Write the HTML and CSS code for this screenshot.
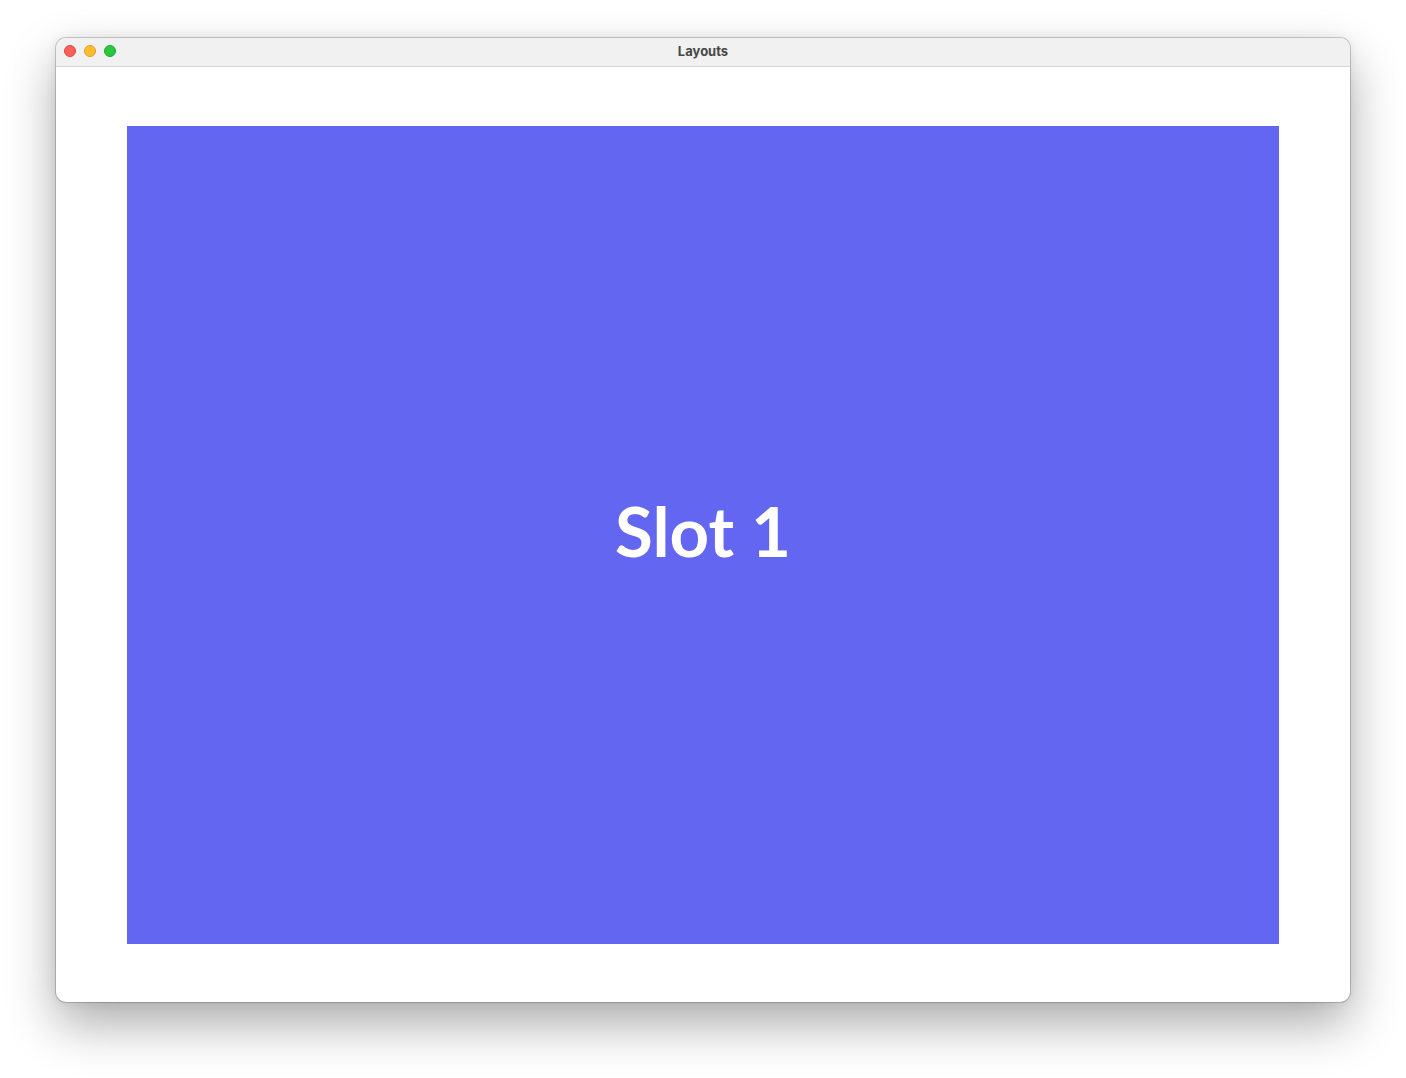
FILE: index.html
```html
<!DOCTYPE html>
<html>
<head>
<meta charset="utf-8">
<title>Layouts</title>
<link rel="stylesheet" href="styles.css">
</head>
<body>
<div class="window">
  <div class="titlebar">
    <div class="lights">
      <span class="light red"></span>
      <span class="light yellow"></span>
      <span class="light green"></span>
    </div>
    <div class="title">Layouts</div>
  </div>
  <div class="content">
    <div class="slot">Slot 1</div>
  </div>
</div>
</body>
</html>
```

FILE: styles.css
```css
html, body {
  margin: 0;
  padding: 0;
  background: #ffffff;
  width: 1406px;
  height: 1078px;
  overflow: hidden;
}
body {
  padding-top: 38px;
  padding-left: 56px;
  box-sizing: border-box;
}
.window {
  width: 1294px;
  height: 964px;
  border-radius: 10px;
  background: #ffffff;
  box-shadow: 0 0 0 1px rgba(0,0,0,0.18), 0 22px 50px rgba(0,0,0,0.33), 0 0 12px rgba(0,0,0,0.08);
  overflow: hidden;
  display: flex;
  flex-direction: column;
}
.titlebar {
  position: relative;
  height: 28px;
  flex: none;
  background: #f0f1f0;
  border-bottom: 1px solid #d6d6d6;
  display: flex;
  align-items: center;
  justify-content: center;
}
.lights {
  position: absolute;
  left: 8px;
  top: 7px;
  display: flex;
  gap: 8px;
}
.light {
  width: 12px;
  height: 12px;
  border-radius: 50%;
  box-sizing: border-box;
}
.red { background: #fe5f57; border: 0.5px solid #e0443e; }
.yellow { background: #febc2e; border: 0.5px solid #dea123; }
.green { background: #28c840; border: 0.5px solid #1aab29; }
.title {
  font-family: "Inter", "Liberation Sans", sans-serif;
  font-weight: 700;
  font-size: 13px;
  color: #474747;
  padding-bottom: 2px;
}
.content {
  flex: 1;
  padding: 59px 71px 58px 71px;
  display: flex;
}
.slot {
  flex: 1;
  background: #6366f1;
  color: #ffffff;
  display: flex;
  align-items: center;
  justify-content: center;
  font-family: "Lato", "Noto Sans", sans-serif;
  font-weight: 700;
  font-size: 69px;
  padding-bottom: 10px;
}
```
